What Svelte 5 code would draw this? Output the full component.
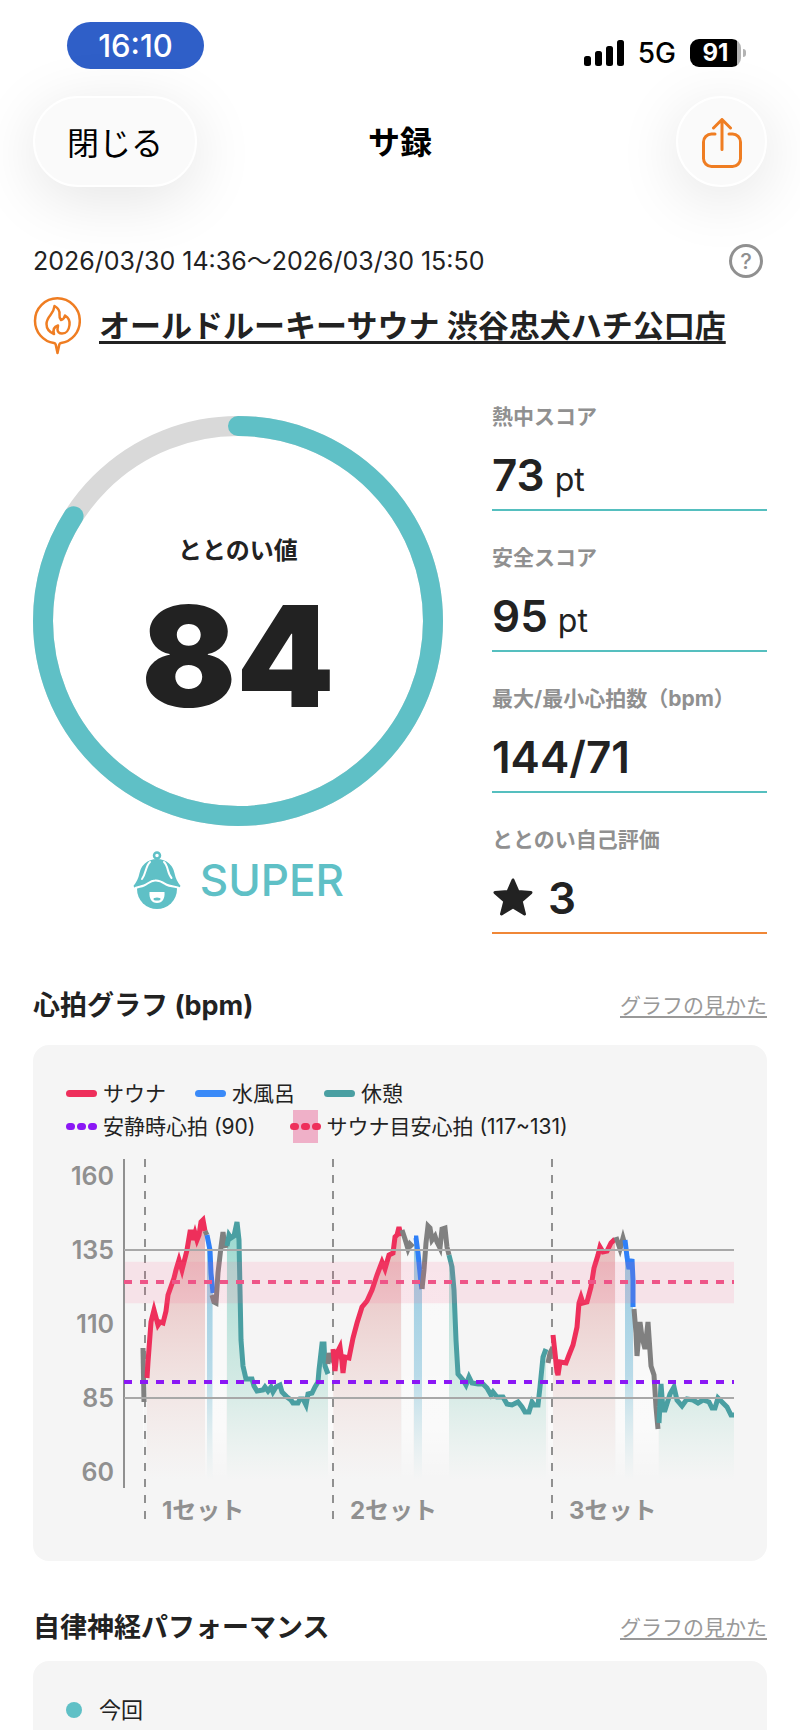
<script lang="ts">
  type Kind = "sauna" | "water" | "rest" | "idle";
  type Segment = { kind: Kind; points: string };

  const stats = [
    { label: "熱中スコア", value: "73", unit: "pt" },
    { label: "安全スコア", value: "95", unit: "pt" },
    { label: "最大/最小心拍数（bpm）", value: "144/71" },
    { label: "ととのい自己評価", value: "3", star: true },
  ];

  const score = 84;
  const radius = 195;
  const circumference = 2 * Math.PI * radius;

  const colors: Record<Kind, string> = {
    sauna: "#ee2f5b",
    water: "#2f80f8",
    rest: "#4a9fa2",
    idle: "#808080",
  };

  const ticks = [160, 135, 110, 85, 60];
  const y = (bpm: number) => 98 + (135 - bpm) * 2.96;
  const baseline = 328;

  const sets = [
    { label: "1セット", x: 79 },
    { label: "2セット", x: 267 },
    { label: "3セット", x: 486 },
  ];

  const segments: Segment[] = [
    { kind: "idle", points: "77,196 78,250" },
    { kind: "sauna", points: "81,226 82,210 85,170 88,158 92,173 94,170 97,171 100,159 102,143 108,126 110,118 113,108 116,118 121,98 124,80 126,80 127,88 129,81 131,88 133,83 135,70 137,68 139,79" },
    { kind: "idle", points: "139,79 141,83" },
    { kind: "water", points: "141,83 144,98 145,121 147,141" },
    { kind: "idle", points: "146,143 148,150 150,151 152,121 155,95 157,80 158,88 160,96" },
    { kind: "rest", points: "161,94 163,83 165,86 168,84 171,70 173,88 174,138 175,188 177,214 180,227 186,227 188,234 191,239 197,238 199,235 202,239 205,235 207,240 210,235 214,233 216,240 221,245 225,248 227,251 232,251 234,247 237,247 240,253 242,242 246,241 249,235 252,230 253,218 256,192 258,192 259,214 262,222" },
    { kind: "idle", points: "262,212 263,201 265,210 266,201 268,211" },
    { kind: "sauna", points: "267,197 269,219 271,201 274,195 276,210 277,221 279,205 283,206 287,186 291,171 296,155 301,149 306,138 311,123 316,110 319,117 323,103 327,101 329,85 331,83 333,75 335,84" },
    { kind: "idle", points: "336,78 339,87 342,97 344,92 347,95" },
    { kind: "water", points: "348,86 350,86 352,101 353,111 355,131 356,137" },
    { kind: "idle", points: "356,137 358,118 360,91 362,74 364,76 366,88 369,84 371,90 374,96 376,77 379,76 381,95 383,103" },
    { kind: "rest", points: "383,103 386,115 388,138 390,188 392,222 397,228 400,233 403,225 406,231 412,232 417,232 421,236 425,243 427,240 431,245 437,245 441,252 446,253 452,250 456,255 459,260 463,260 466,250 468,253 472,253 474,235 477,205 480,197" },
    { kind: "idle", points: "482,211 484,201 487,195" },
    { kind: "sauna", points: "487,183 489,201 491,220 492,223 494,210 500,211 503,203 507,193 511,175 513,151 515,145 517,151 521,150 525,135 528,116 532,103 534,95 537,100 541,99 545,91 549,87" },
    { kind: "idle", points: "550,85 554,97 557,86 559,93" },
    { kind: "water", points: "559,88 561,105 563,117 566,107 567,128 567,155" },
    { kind: "idle", points: "568,157 570,181 571,204 574,170 576,185 579,197 582,170 585,214 588,223 590,255 592,277" },
    { kind: "rest", points: "593,271 595,232 597,258 599,258 604,242 608,235 611,248 616,254 621,247 627,248 632,251 637,248 643,250 646,256 649,256 652,246 656,250 661,255 665,263 668,263" },
  ];

  function area(points: string) {
    const list = points.split(" ");
    const first = list[0].split(",")[0];
    const last = list[list.length - 1].split(",")[0];
    return `${first},${baseline} ${points} ${last},${baseline}`;
  }
</script>

<div class="page">
  <div class="status">
    <span class="clock">16:10</span>
    <div class="status-icons">
      <svg width="40" height="26" viewBox="0 0 40 26" aria-hidden="true">
        <rect x="0" y="16" width="7" height="10" rx="2.500" />
        <rect x="11" y="11" width="7" height="15" rx="2.500" />
        <rect x="22" y="6" width="7" height="20" rx="2.500" />
        <rect x="33" y="0" width="7" height="26" rx="2.500" />
      </svg>
      <span class="network">5G</span>
      <div class="battery">
        <span class="battery-level">91</span>
        <span class="battery-cap"></span>
      </div>
    </div>
  </div>

  <header class="nav">
    <button class="glass close">閉じる</button>
    <h1>サ録</h1>
    <button class="glass share" aria-label="共有">
      <svg width="40" height="50" viewBox="0 0 40 50" fill="none" stroke="#ef7d22" stroke-width="3" stroke-linecap="round" stroke-linejoin="round" aria-hidden="true">
        <path d="M13 16H9.500a8 8 0 0 0-8 8v16.500a8 8 0 0 0 8 8h21a8 8 0 0 0 8-8V24a8 8 0 0 0-8-8H27" />
        <path d="M20 31.500V2M11.500 10L20 1.500l8.500 8.500" />
      </svg>
    </button>
  </header>

  <main>
    <div class="period">
      <span>2026/03/30 14:36〜2026/03/30 15:50</span>
      <button class="help" aria-label="ヘルプ">?</button>
    </div>

    <div class="place">
      <svg width="48" height="58" viewBox="0 0 48 58" fill="none" stroke="#ef7d22" stroke-linejoin="round" stroke-linecap="round" aria-hidden="true">
        <path stroke-width="2.500" d="M21 46C10 44.500 2 35 2 23.700A22.400 22.400 0 0 1 46.800 23.700C46.800 35 39 44.500 28 46C26.800 46.200 26.500 46.800 26.300 47.500L24.500 56L22.700 47.500C22.500 46.800 22.200 46.200 21 46Z" />
        <path stroke-width="2.500" d="M21 37C16 35 13.500 31 13.500 27C13.500 23 15.500 20.500 17.500 18C19.800 15 21.200 12.500 21.500 9C25 11 27 14 26.500 17.500C26.300 19.500 26.500 21.500 28 23C30 22.500 31.500 20.800 32 18.500C35.500 20.500 37 24 36.500 28C36 33 33 36.500 29 36.500C26 36.500 24.500 34.500 24.500 32.500C24.500 31 25 30 25 28.500C22 29.500 19.500 32 21 37Z" />
      </svg>
      <a href="#place">オールドルーキーサウナ 渋谷忠犬ハチ公口店</a>
    </div>

    <section class="summary">
      <div class="total">
        <div class="ring">
          <svg viewBox="0 0 410 410" fill="none" stroke-width="20" aria-hidden="true">
            <circle cx="205" cy="205" r={radius} stroke="#d9d9d9" />
            <circle
              cx="205" cy="205" r={radius} stroke="#5fc0c6" stroke-linecap="round"
              stroke-dasharray="{(circumference * score) / 100} {circumference}"
              transform="rotate(-90 205 205)"
            />
          </svg>
          <div class="ring-text">
            <span class="ring-label">ととのい値</span>
            <span class="ring-score">{score}</span>
          </div>
        </div>
        <div class="rank">
          <svg width="50" height="58" viewBox="0 0 50 58" aria-hidden="true">
            <circle cx="25" cy="38" r="20" fill="#5fc0c6" />
            <path fill="#5fc0c6" stroke="#fff" stroke-width="2" d="M25 7C14 7 8 15 6.500 22C5.500 27 3.500 31 .5 34.500L1.500 38C5 36 8 36 12 34.500C16 33 18 29.500 23 29.500C28 29 31 31.500 34 33.500C39 36 44 35 48.500 37.500L49.500 34.500C46.500 31 44.500 27 43.500 22C42 15 36 7 25 7Z" />
            <circle cx="25" cy="4.500" r="3" fill="#fff" stroke="#5fc0c6" stroke-width="2.500" />
            <path fill="none" stroke="#fff" stroke-width="2" stroke-linecap="round" d="M18 11C13.500 15 14 23 10 28M32 11C36.500 15 35 22 39.500 27" />
            <path fill="#fff" d="M17.500 41L32.500 41C33 47.500 30.500 52 25 52C19.500 52 17 47.500 17.500 41Z" />
            <ellipse cx="25" cy="48" rx="3.500" ry="1.500" fill="#5fc0c6" />
          </svg>
          <span>SUPER</span>
        </div>
      </div>

      <dl class="stats">
        {#each stats as stat}
          <div class="stat" class:self={stat.star}>
            <dt>{stat.label}</dt>
            <dd>
              {#if stat.star}
                <svg width="42" height="40" viewBox="0 0 42 40" aria-hidden="true">
                  <path fill="#222" stroke="#222" stroke-width="3" stroke-linejoin="round" d="M21 2L26 13.500L39 14.500L29.200 23L32.500 36L21 29L9.500 36L12.800 23L3 14.500L16 13.500Z" />
                </svg>
              {/if}
              <span class="value">{stat.value}</span>
              {#if stat.unit}<span class="unit">{stat.unit}</span>{/if}
            </dd>
          </div>
        {/each}
      </dl>
    </section>

    <div class="heading">
      <h2>心拍グラフ (bpm)</h2>
      <a href="#heart-help">グラフの見かた</a>
    </div>
    <section class="card">
      <ul class="legend">
        <li><i class="bar sauna"></i>サウナ</li>
        <li><i class="bar water"></i>水風呂</li>
        <li><i class="bar rest"></i>休憩</li>
      </ul>
      <ul class="legend guides">
        <li><i class="dots calm"><b></b><b></b><b></b></i>安静時心拍 (90)</li>
        <li><i class="dots target"><b></b><b></b><b></b></i>サウナ目安心拍 (117~131)</li>
      </ul>

      <svg class="chart" viewBox="0 0 668 384" role="img" aria-label="心拍グラフ">
        <defs>
          <linearGradient id="fill-sauna" gradientUnits="userSpaceOnUse" x1="0" y1="68" x2="0" y2={baseline}>
            <stop offset="0" stop-color="#c8363c" stop-opacity="0.36" />
            <stop offset="1" stop-color="#e09a88" stop-opacity="0" />
          </linearGradient>
          <linearGradient id="fill-water" gradientUnits="userSpaceOnUse" x1="0" y1="68" x2="0" y2={baseline}>
            <stop offset="0" stop-color="#4aa8d0" stop-opacity="0.6" />
            <stop offset="0.600" stop-color="#7cc0dc" stop-opacity="0.5" />
            <stop offset="1" stop-color="#a8dce0" stop-opacity="0" />
          </linearGradient>
          <linearGradient id="fill-rest" gradientUnits="userSpaceOnUse" x1="0" y1="68" x2="0" y2={baseline}>
            <stop offset="0" stop-color="#4abfae" stop-opacity="0.55" />
            <stop offset="0.650" stop-color="#7accb8" stop-opacity="0.26" />
            <stop offset="1" stop-color="#9cd8c6" stop-opacity="0" />
          </linearGradient>
          <linearGradient id="fill-idle" gradientUnits="userSpaceOnUse" x1="0" y1="68" x2="0" y2={baseline}>
            <stop offset="0" stop-color="#fff" stop-opacity="0.3" />
            <stop offset="0.800" stop-color="#fff" stop-opacity="0.5" />
            <stop offset="1" stop-color="#fff" stop-opacity="0" />
          </linearGradient>
        </defs>

        {#each segments as segment}
          <polygon points={area(segment.points)} fill="url(#fill-{segment.kind})" />
        {/each}
        {#each sets as set}
          <line class="set-line" x1={set.x} x2={set.x} y1="7" y2="375" />
          <text class="set-label" x={set.x + 17} y="367">{set.label}</text>
        {/each}
        {#each segments as segment}
          <polyline points={segment.points} fill="none" stroke={colors[segment.kind]} stroke-width="5" />
        {/each}

        <rect x="59" y={y(131)} width="609" height={y(117) - y(131)} fill="#ff5a8c" opacity="0.12" />
        <line class="axis" x1="58" x2="58" y1="7" y2="336" />
        {#each ticks as tick}
          <text class="tick" x="48" y={y(tick) + 9}>{tick}</text>
        {/each}
        <line class="grid" x1="58" x2="668" y1={y(135)} y2={y(135)} />
        <line class="grid" x1="58" x2="668" y1={y(85)} y2={y(85)} />
        <line class="guide target-line" x1="58" x2="668" y1="130" y2="130" />
        <line class="guide calm-line" x1="58" x2="668" y1="230" y2="230" />
      </svg>
    </section>

    <div class="heading second">
      <h2>自律神経パフォーマンス</h2>
      <a href="#nerve-help">グラフの見かた</a>
    </div>
    <section class="card last">
      <p class="current"><i></i>今回</p>
    </section>
  </main>
</div>

<style>
  :global(body) {
    background: #fff;
    color: #222;
    font-family: Inter, "Noto Sans CJK JP", sans-serif;
  }
  h1, h2, p, ul, dl, dd { margin: 0; padding: 0; }
  svg { display: block; flex-shrink: 0; }
  button { font-family: inherit; cursor: pointer; padding: 0; }

  .page {
    min-height: 100vh;
    box-sizing: border-box;
    display: flex;
    flex-direction: column;
    overflow: hidden;
  }

  .status {
    display: flex; justify-content: space-between; align-items: flex-end;
    padding: 22px 54px 0 67px;
  }
  .clock {
    width: 137px; height: 47px; line-height: 47px;
    border-radius: 24px;
    background: #2f5fc8; color: #fff;
    font-size: 31px; font-weight: 500; text-align: center;
  }
  .status-icons { display: flex; align-items: center; gap: 14px; height: 32px; color: #000; }
  .network { font-size: 28px; font-weight: 500; line-height: 32px; }
  .battery { display: flex; align-items: center; gap: 2px; }
  .battery-level {
    width: 51px; height: 28px; line-height: 28px;
    border-radius: 9px;
    background: linear-gradient(90deg, #000 47px, #b3b3b3 47px);
    color: #fff; font-size: 24px; font-weight: 700; text-align: center;
  }
  .battery-cap { width: 3px; height: 8px; border-radius: 0 3px 3px 0; background: #b3b3b3; }

  .nav {
    display: grid; grid-template-columns: 1fr auto 1fr; align-items: center;
    margin-top: 27px; padding: 0 33px;
    color: #000;
  }
  h1 { font-size: 32px; line-height: 48px; font-weight: 700; padding-top: 2px; }
  .glass {
    height: 91px;
    border: 2px solid #fff; border-radius: 46px;
    background: #fafafa;
    box-shadow: 0 12px 64px rgba(0, 0, 0, 0.11);
    color: #000; font-size: 32px;
  }
  .close { width: 164px; justify-self: start; padding-bottom: 2px; }
  .share { width: 91px; justify-self: end; display: flex; align-items: center; justify-content: center; padding-top: 3px; }

  main { flex: 1; display: flex; flex-direction: column; padding: 57px 33px 0; }

  .period { display: flex; justify-content: space-between; align-items: center; font-size: 25px; line-height: 34px; }
  .help {
    width: 34px; height: 34px; margin-right: 4px;
    border: 3px solid #909090; border-radius: 50%;
    background: none; color: #909090;
    font-size: 22px; font-weight: 500; line-height: 28px;
  }

  .place { display: flex; align-items: center; gap: 18px; margin-top: 19px; }
  .place a {
    color: #222; font-size: 31px; font-weight: 700; line-height: 48px;
    text-decoration-thickness: 3px; text-underline-offset: 4px;
    white-space: nowrap;
  }

  .summary { display: grid; grid-template-columns: 410fr 275fr; gap: 49px; margin-top: 48px; }
  .total { padding-top: 13px; }
  .ring { display: grid; }
  .ring > * { grid-area: 1 / 1; }
  .ring-text { display: flex; flex-direction: column; align-items: center; padding-top: 117px; }
  .ring-label { font-size: 24px; font-weight: 700; line-height: 36px; }
  .ring-score { font-size: 140px; font-weight: 900; line-height: 174px; }
  .rank {
    display: flex; align-items: center; justify-content: center; gap: 18px;
    margin-top: 25px;
    color: #5fc0c6; font-size: 44px; font-weight: 500; line-height: 58px;
  }

  .stats { display: flex; flex-direction: column; gap: 33px; }
  .stat { border-bottom: 2px solid #55bfbf; padding-bottom: 8px; }
  .stat.self { border-color: #f08737; }
  dt { color: #909090; font-size: 21px; font-weight: 700; line-height: 28px; margin-bottom: 18px; }
  dd { display: flex; align-items: baseline; gap: 10px; height: 52px; line-height: 52px; }
  .self dd { align-items: center; gap: 14px; }
  .value { font-size: 44px; font-weight: 600; }
  .unit { font-size: 32px; }

  .heading { display: flex; justify-content: space-between; align-items: center; margin: 54px 0 21px; height: 36px; }
  .heading.second { margin: 49px 0 15px; }
  h2 { font-size: 27px; font-weight: 700; line-height: 36px; }
  .heading a { color: #999; font-size: 21px; line-height: 36px; text-underline-offset: 3px; }

  .card { background: #f5f5f5; border-radius: 16px; padding: 32px 33px 25px; }
  .card.last { flex: 1; border-radius: 16px 16px 0 0; padding-bottom: 0; }

  .legend { display: flex; gap: 29px; list-style: none; font-size: 21px; line-height: 33px; }
  .legend.guides { gap: 34px; }
  .legend li { display: flex; align-items: center; gap: 6px; }
  .bar { width: 31px; height: 7px; border-radius: 4px; }
  .sauna { background: #ee2f5b; }
  .water { background: #3a8af8; }
  .rest { background: #4a9fa2; }
  .dots { display: flex; gap: 2px; align-items: center; height: 33px; }
  .dots b { width: 9px; height: 7px; border-radius: 4px; background: #8b17f5; }
  .dots.target { background: linear-gradient(#efb0c8, #efb0c8) center / 25px 100% no-repeat; }
  .dots.target b { background: #ee2f5b; }

  .chart { width: 100%; height: auto; margin-top: 9px; }
  .axis { stroke: #909090; stroke-width: 2; }
  .grid { stroke: #a8a8a8; stroke-width: 2; }
  .set-line { stroke: #909090; stroke-width: 2; stroke-dasharray: 8 8; }
  .guide { stroke-width: 4; stroke-dasharray: 8 8; }
  .target-line { stroke: #ee5588; }
  .calm-line { stroke: #8b17f5; }
  .tick { fill: #909090; font-size: 25px; font-weight: 600; text-anchor: end; }
  .set-label { fill: #909090; font-size: 24px; font-weight: 700; }

  .current { display: flex; align-items: center; gap: 17px; font-size: 22px; line-height: 34px; }
  .current i { width: 16px; height: 16px; border-radius: 50%; background: #5fc0c6; }
</style>
